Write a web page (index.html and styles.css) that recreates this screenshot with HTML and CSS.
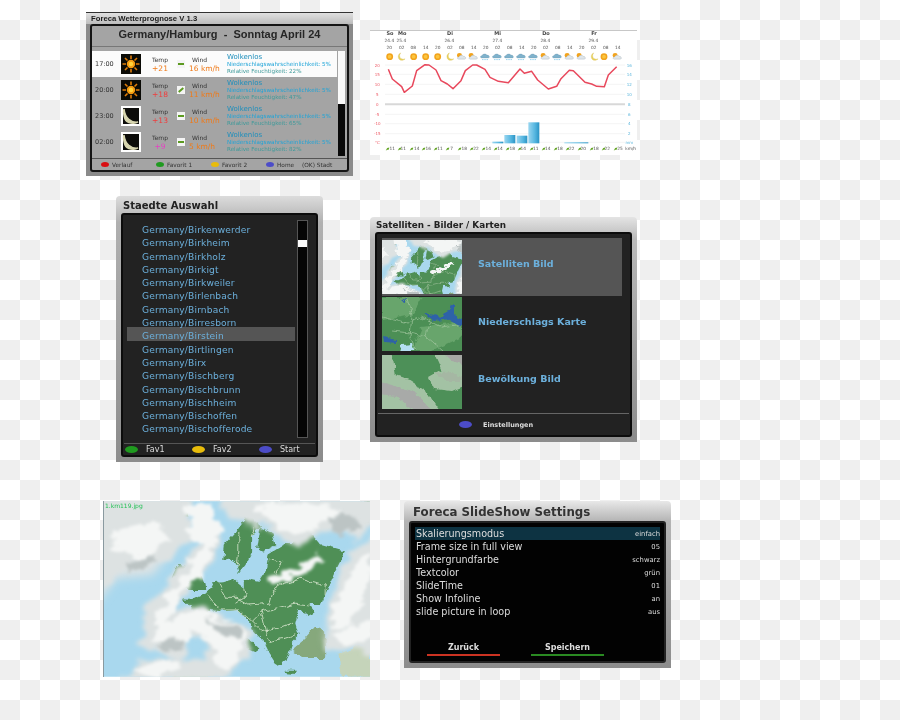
FILE: index.html
```html
<!DOCTYPE html>
<html lang="de">
<head>
<meta charset="utf-8">
<title>Foreca</title>
<link rel="stylesheet" href="styles.css">
</head>
<body>
<svg class="defs" width="0" height="0" aria-hidden="true">
  <defs>
    <linearGradient id="bar" x1="0" y1="0" x2="1" y2="0">
      <stop offset="0" stop-color="#9ad6f0"/><stop offset=".6" stop-color="#55b6e0"/><stop offset="1" stop-color="#2a93c4"/>
    </linearGradient>
    <filter id="haze" x="-15%" y="-15%" width="130%" height="130%">
      <feGaussianBlur stdDeviation="14"/>
    </filter>
    <filter id="coast" x="-5%" y="-5%" width="110%" height="110%">
      <feTurbulence type="fractalNoise" baseFrequency=".035" numOctaves="3" seed="7" result="n"/>
      <feDisplacementMap in="SourceGraphic" in2="n" scale="22" xChannelSelector="R" yChannelSelector="G"/>
      <feGaussianBlur stdDeviation="1.500"/>
    </filter>
    <filter id="cloudA" x="-10%" y="-10%" width="120%" height="120%">
      <feTurbulence type="fractalNoise" baseFrequency=".012 .022" numOctaves="4" seed="11" result="n"/>
      <feDisplacementMap in="SourceGraphic" in2="n" scale="70" xChannelSelector="R" yChannelSelector="G"/>
      <feGaussianBlur stdDeviation="7"/>
    </filter>
    <filter id="cloudB" x="-10%" y="-10%" width="120%" height="120%">
      <feTurbulence type="fractalNoise" baseFrequency=".02 .035" numOctaves="4" seed="23" result="n"/>
      <feDisplacementMap in="SourceGraphic" in2="n" scale="55" xChannelSelector="G" yChannelSelector="R"/>
      <feGaussianBlur stdDeviation="5"/>
    </filter>
    <filter id="thumbRough" x="-5%" y="-5%" width="110%" height="110%">
      <feTurbulence type="fractalNoise" baseFrequency=".14" numOctaves="3" seed="5" result="n"/>
      <feDisplacementMap in="SourceGraphic" in2="n" scale="6" xChannelSelector="R" yChannelSelector="G"/>
    </filter>
    <symbol id="sun" viewBox="0 0 20 20">
      <rect width="20" height="20" fill="#0a0a05"/>
      <g stroke="#e07c08" stroke-width="1.600">
        <path d="M10 1.500V5M10 15v3.500M1.500 10H5M15 10h3.500M4 4l2.500 2.500M13.500 13.500L16 16M16 4l-2.500 2.500M6.500 13.500L4 16"/>
      </g>
      <circle cx="10" cy="10" r="4.200" fill="#f59b12"/>
      <circle cx="10" cy="10" r="2.200" fill="#ffd23c"/>
    </symbol>
    <symbol id="moon" viewBox="0 0 20 20">
      <rect width="20" height="20" fill="#fff"/>
      <rect x="2" y="2" width="16" height="16" fill="#0c0c0a"/>
      <path d="M3 3 C4 12 10 17 17 16 C14 18 6 18 4 13 C3 10 2 6 3 3Z" fill="#d8d6b0" stroke="#d8d6b0" stroke-width="1.500"/>
    </symbol>
    <symbol id="wsun" viewBox="0 0 30 30">
      <circle cx="15" cy="15" r="11" fill="#f2a31c"/>
      <circle cx="15" cy="15" r="6" fill="#fbc53f"/>
    </symbol>
    <symbol id="wmoon" viewBox="0 0 30 30">
      <path d="M12 3 C4 12 10 27 26 22 C20 30 4 28 4 15 C4 9 7 5 12 3Z" fill="#e9d25e" stroke="#d9bf50"/>
    </symbol>
    <symbol id="wcloud" viewBox="0 0 36 30">
      <circle cx="11" cy="11" r="8" fill="#f2a31c"/>
      <path d="M8 23 C3 23 3 16 9 16 C11 9 22 9 24 14 C31 13 34 23 27 23Z" fill="#dfe6ea" stroke="#9aa5ad"/>
    </symbol>
    <symbol id="wrain" viewBox="0 0 36 30">
      <path d="M6 19 C1 19 1 12 7 12 C9 5 21 5 23 10 C31 9 34 19 27 19Z" fill="#7fb2cc" stroke="#6c98ae"/>
      <path d="M10 23v3M17 23v3M24 23v3" stroke="#2fa6dc" stroke-width="2.500"/>
    </symbol>
    <symbol id="leaf" viewBox="0 0 12 12">
      <path d="M1 11 L5 4 L11 2 L10 8 L4 9Z" fill="#69a82c"/>
    </symbol>
    <symbol id="europe" viewBox="24 18 801 528" preserveAspectRatio="xMidYMid slice">
      <rect x="0" y="0" width="860" height="560" fill="#a9d8ee"/>
      <g fill="#4f8f57" filter="url(#coast)">
        <path d="M380 195L385 150L420 110L450 65L490 85L500 95L470 120L470 170L450 210L430 235L420 200L400 190Z"/>
        <path d="M490 130L495 100L530 115L540 150L500 170L485 160Z"/>
        <path d="M260 310L295 312L335 292L350 265L380 262L415 252L445 275L445 250L490 260L510 230L520 175L560 150L650 115L680 150L750 170L715 240L690 300L680 330L640 330L655 350L635 360L610 345L600 385L610 420L590 440L570 500L545 510L520 470L505 440L470 405L460 380L430 345L380 350L340 345L295 350Z"/>
        <path d="M440 420L470 440L495 465L480 470L455 460L435 430Z"/>
        <path d="M265 285L295 225L315 225L330 270L332 285L290 285Z"/>
        <path d="M228 248L245 210L270 212L255 245Z"/>
        <path d="M190 395L205 365L248 385L245 405L200 405Z"/>
        <path d="M240 50L270 40L275 70L250 70Z"/>
        <path d="M570 525L605 525L600 535L572 533Z"/>
        <path d="M730 30L825 20L825 80L760 70Z"/>
        <path d="M730 390L825 345L825 365L750 400Z"/>
        <path d="M590 465L620 440L660 395L690 410L690 490L620 490Z" fill="#86a87c"/>
      </g>
      <g filter="url(#coast)">
        <path d="M730 480L825 440V546H740Z" fill="#c5d4ba"/>
        <path d="M230 520L300 505L360 510L350 546H230Z" fill="#cdd9bd"/>
      </g>
      <g fill="none" stroke="#d6e4cc" stroke-width="2.500" filter="url(#coast)">
        <path d="M335 295L375 345L430 345L470 380L500 350L560 335L600 325L640 330"/>
        <path d="M370 265L395 310L425 310L460 330L520 325L530 290L560 270L620 250L690 270L690 300"/>
        <path d="M445 275L450 305L420 325"/>
        <path d="M470 380L500 410L550 400L590 385M500 350L510 395L520 440L570 430L600 420"/>
        <path d="M430 110L430 170L425 215M470 120L480 100M520 195L560 200L540 235"/>
      </g>
      <path d="M0 0H270L240 150L170 240L60 250L0 330Z" fill="#dde3e4" filter="url(#haze)"/>
      <path d="M690 440L720 300L780 190L860 110V440Z" fill="#dfe3e3" filter="url(#haze)"/>
      <g filter="url(#cloudA)" fill="#dde2e2">
        <path d="M0 0H300L285 130L205 200L110 190L0 300Z"/>
        <path d="M380 0H860V60L790 130L680 115L590 150L510 90L440 70L380 60Z"/>
        <path d="M690 470L690 340L750 200L860 100V470Z"/>
        <path d="M70 560L120 505L230 490L370 495L370 560Z"/>
        <path d="M140 440L165 310L265 195L340 110L380 120L345 200L300 250L250 320L200 400L200 450Z"/>
        <path d="M140 440L190 360L300 340L410 365L475 425L450 480L400 550L345 540L340 450L290 430L250 490L180 480Z"/>
      </g>
      <g filter="url(#cloudB)" fill="#f4f6f5">
        <path d="M50 110L190 80L215 130L150 185L50 165Z"/>
        <path d="M175 380L215 300L285 215L345 130L365 140L335 200L290 260L230 340L195 400Z"/>
        <path d="M275 30H345L375 100L335 150L285 130Z"/>
        <path d="M165 430L200 375L300 350L400 375L455 420L430 470L400 530L360 520L350 440L290 415L245 470L190 460Z"/>
        <path d="M520 255L590 220L670 175L690 190L620 240L540 270Z"/>
        <path d="M470 25H700L730 60L650 105L590 120L520 75Z"/>
        <path d="M700 400L735 300L795 180L825 170V270L765 400Z"/>
        <path d="M100 535L180 495L265 505L210 540Z"/>
        <path d="M275 205L330 180L320 250L290 240Z"/>
        <path d="M720 420L825 380V430L745 450Z"/>
      </g>
      <g filter="url(#cloudB)" fill="#bcc4c4">
        <path d="M175 450L260 432L270 460L205 478Z"/>
        <path d="M700 70L780 50L790 100L720 120Z"/>
        <path d="M330 372L420 388L440 430L370 412Z"/>
        <path d="M80 210L170 175L180 200L100 235Z"/>
      </g>
    </symbol>
  </defs>
</svg>

<main class="canvas">

  <section class="panel forecast">
    <h2 class="f-title">Foreca Wetterprognose V 1.3</h2>
    <div class="f-frame">
      <h1 class="f-head">Germany/Hamburg &nbsp;-&nbsp; Sonntag April 24</h1>
      <div class="f-body">
        <div class="f-rows">
          <div class="f-row active">
            <span class="f-time">17:00</span>
            <svg class="f-icon"><use href="#sun"/></svg>
            <div class="f-temp"><span>Temp</span><b class="t-orange">+21</b></div>
            <span class="f-wind-ico"><i class="flat"></i></span>
            <div class="f-wind"><span>Wind</span><b>16 km/h</b></div>
            <div class="f-desc"><strong>Wolkenlos</strong><span>Niederschlagswahrscheinlichkeit: 5%</span><span>Relative Feuchtigkeit: 22%</span></div>
          </div>
          <div class="f-row">
            <span class="f-time">20:00</span>
            <svg class="f-icon"><use href="#sun"/></svg>
            <div class="f-temp"><span>Temp</span><b class="t-red">+18</b></div>
            <span class="f-wind-ico"><i class="up"></i></span>
            <div class="f-wind"><span>Wind</span><b>11 km/h</b></div>
            <div class="f-desc"><strong>Wolkenlos</strong><span>Niederschlagswahrscheinlichkeit: 5%</span><span>Relative Feuchtigkeit: 47%</span></div>
          </div>
          <div class="f-row">
            <span class="f-time">23:00</span>
            <svg class="f-icon"><use href="#moon"/></svg>
            <div class="f-temp"><span>Temp</span><b class="t-red">+13</b></div>
            <span class="f-wind-ico"><i class="flat"></i></span>
            <div class="f-wind"><span>Wind</span><b>10 km/h</b></div>
            <div class="f-desc"><strong>Wolkenlos</strong><span>Niederschlagswahrscheinlichkeit: 5%</span><span>Relative Feuchtigkeit: 65%</span></div>
          </div>
          <div class="f-row">
            <span class="f-time">02:00</span>
            <svg class="f-icon"><use href="#moon"/></svg>
            <div class="f-temp"><span>Temp</span><b class="t-pink">+9</b></div>
            <span class="f-wind-ico"><i class="flat"></i></span>
            <div class="f-wind"><span>Wind</span><b>5 km/h</b></div>
            <div class="f-desc"><strong>Wolkenlos</strong><span>Niederschlagswahrscheinlichkeit: 5%</span><span>Relative Feuchtigkeit: 82%</span></div>
          </div>
        </div>
        <div class="f-scroll"><i></i></div>
      </div>
      <footer class="f-foot">
        <span class="f-key"><i class="dot red"></i>Verlauf</span>
        <span class="f-key"><i class="dot green"></i>Favorit 1</span>
        <span class="f-key"><i class="dot yellow"></i>Favorit 2</span>
        <span class="f-key"><i class="dot blue"></i>Home</span>
        <span class="f-key f-ok">(OK) Stadt</span>
      </footer>
    </div>
  </section>

  <section class="panel chart">
    <svg class="chart-svg" viewBox="30 30 801 375" role="img" aria-label="Wetterdiagramm">
      <path class="c-top" d="M30 31H831"/>
      <g class="c-grid">
        <path d="M75 135H795M75 163H795M75 193H795M75 223H795M75 283H795M75 311H795M75 341H795M75 367H795"/>
      </g>
      <path class="c-zero" d="M75 253H795"/>
      <g class="c-day">
        <text x="90" y="44">So</text><text x="127" y="44">Mo</text><text x="270" y="44">Di</text><text x="413" y="44">Mi</text><text x="558" y="44">Do</text><text x="702" y="44">Fr</text>
      </g>
      <g class="c-date">
        <text x="88" y="66">24.4</text><text x="124" y="66">25.4</text><text x="268" y="66">26.4</text><text x="412" y="66">27.4</text><text x="556" y="66">28.4</text><text x="700" y="66">29.4</text>
      </g>
      <g class="c-hour">
        <text x="88" y="87">20</text><text x="125" y="87">02</text><text x="160" y="87">08</text><text x="197" y="87">14</text><text x="233" y="87">20</text><text x="270" y="87">02</text><text x="305" y="87">08</text><text x="341" y="87">14</text><text x="377" y="87">20</text><text x="413" y="87">02</text><text x="449" y="87">08</text><text x="485" y="87">14</text><text x="521" y="87">20</text><text x="557" y="87">02</text><text x="593" y="87">08</text><text x="629" y="87">14</text><text x="665" y="87">20</text><text x="701" y="87">02</text><text x="737" y="87">08</text><text x="773" y="87">14</text>
      </g>
      <use href="#wsun" x="75" y="96" width="28" height="28"/>
      <use href="#wmoon" x="111" y="96" width="28" height="28"/>
      <use href="#wsun" x="147" y="96" width="28" height="28"/>
      <use href="#wsun" x="183" y="96" width="28" height="28"/>
      <use href="#wsun" x="219" y="96" width="28" height="28"/>
      <use href="#wmoon" x="255" y="96" width="32" height="28"/>
      <use href="#wcloud" x="287" y="96" width="36" height="28"/>
      <use href="#wcloud" x="322" y="96" width="36" height="28"/>
      <use href="#wrain" x="358" y="96" width="36" height="28"/>
      <use href="#wrain" x="394" y="96" width="36" height="28"/>
      <use href="#wrain" x="430" y="96" width="36" height="28"/>
      <use href="#wrain" x="466" y="96" width="36" height="28"/>
      <use href="#wrain" x="502" y="96" width="36" height="28"/>
      <use href="#wcloud" x="538" y="96" width="36" height="28"/>
      <use href="#wrain" x="574" y="96" width="36" height="28"/>
      <use href="#wcloud" x="610" y="96" width="36" height="28"/>
      <use href="#wcloud" x="646" y="96" width="36" height="28"/>
      <use href="#wmoon" x="690" y="96" width="28" height="28"/>
      <use href="#wsun" x="718" y="96" width="28" height="28"/>
      <use href="#wcloud" x="754" y="96" width="36" height="28"/>
      <g class="c-axis-l">
        <text x="52" y="140">20</text><text x="52" y="168">15</text><text x="52" y="198">10</text><text x="52" y="228">5</text><text x="52" y="258">0</text><text x="52" y="288">-5</text><text x="52" y="316">-10</text><text x="52" y="346">-15</text><text x="52" y="372">°C</text>
      </g>
      <g class="c-axis-r">
        <text x="808" y="140">16</text><text x="808" y="168">14</text><text x="808" y="198">12</text><text x="808" y="228">10</text><text x="808" y="258">8</text><text x="808" y="288">6</text><text x="808" y="316">4</text><text x="808" y="346">2</text><text x="808" y="372">mm</text>
      </g>
      <g class="c-bars">
        <rect x="397" y="365" width="33" height="5"/>
        <rect x="433" y="345" width="33" height="25"/>
        <rect x="470" y="347" width="32" height="23"/>
        <rect x="505" y="307" width="33" height="63"/>
        <rect x="613" y="367" width="72" height="3"/>
      </g>
      <polyline class="c-line" points="85,148 97,177 125,200 133,217 157,198 170,152 195,134 207,135 228,150 243,182 262,192 279,206 303,182 316,152 338,135 350,135 375,148 390,172 415,184 445,188 480,147 493,160 515,154 533,180 565,207 590,199 603,176 628,151 640,152 675,187 695,192 710,199 733,200 745,165 770,140"/>
      <g class="c-wind">
        <text x="97" y="391">11</text><text x="130" y="391">11</text><text x="170" y="391">14</text><text x="205" y="391">16</text><text x="240" y="391">11</text><text x="275" y="391">7</text><text x="313" y="391">18</text><text x="348" y="391">22</text><text x="385" y="391">14</text><text x="420" y="391">14</text><text x="457" y="391">18</text><text x="490" y="391">14</text><text x="527" y="391">11</text><text x="563" y="391">14</text><text x="600" y="391">18</text><text x="635" y="391">22</text><text x="670" y="391">20</text><text x="708" y="391">18</text><text x="742" y="391">22</text><text x="780" y="391">25</text><text x="812" y="391">km/h</text>
      </g>
      <g>
        <use href="#leaf" x="76" y="380" width="13" height="13"/><use href="#leaf" x="112" y="380" width="13" height="13"/><use href="#leaf" x="148" y="380" width="13" height="13"/><use href="#leaf" x="184" y="380" width="13" height="13"/><use href="#leaf" x="220" y="380" width="13" height="13"/><use href="#leaf" x="256" y="380" width="13" height="13"/><use href="#leaf" x="292" y="380" width="13" height="13"/><use href="#leaf" x="328" y="380" width="13" height="13"/><use href="#leaf" x="364" y="380" width="13" height="13"/><use href="#leaf" x="400" y="380" width="13" height="13"/><use href="#leaf" x="436" y="380" width="13" height="13"/><use href="#leaf" x="472" y="380" width="13" height="13"/><use href="#leaf" x="508" y="380" width="13" height="13"/><use href="#leaf" x="544" y="380" width="13" height="13"/><use href="#leaf" x="580" y="380" width="13" height="13"/><use href="#leaf" x="616" y="380" width="13" height="13"/><use href="#leaf" x="652" y="380" width="13" height="13"/><use href="#leaf" x="688" y="380" width="13" height="13"/><use href="#leaf" x="724" y="380" width="13" height="13"/><use href="#leaf" x="760" y="380" width="13" height="13"/>
      </g>
    </svg>
  </section>

  <section class="panel cities">
    <h2 class="d-title">Staedte Auswahl</h2>
    <div class="d-frame">
      <div class="c-main">
        <ul class="c-list">
          <li>Germany/Birkenwerder</li>
          <li>Germany/Birkheim</li>
          <li>Germany/Birkholz</li>
          <li>Germany/Birkigt</li>
          <li>Germany/Birkweiler</li>
          <li>Germany/Birlenbach</li>
          <li>Germany/Birnbach</li>
          <li>Germany/Birresborn</li>
          <li class="sel">Germany/Birstein</li>
          <li>Germany/Birtlingen</li>
          <li>Germany/Birx</li>
          <li>Germany/Bischberg</li>
          <li>Germany/Bischbrunn</li>
          <li>Germany/Bischheim</li>
          <li>Germany/Bischoffen</li>
          <li>Germany/Bischofferode</li>
        </ul>
        <div class="c-scroll"><i></i></div>
      </div>
      <footer class="c-foot">
        <span class="c-key"><i class="dot big green"></i>Fav1</span>
        <span class="c-key"><i class="dot big yellow"></i>Fav2</span>
        <span class="c-key"><i class="dot big blue"></i>Start</span>
      </footer>
    </div>
  </section>

  <section class="panel sat">
    <h2 class="s-title">Satelliten - Bilder / Karten</h2>
    <div class="d-frame s-frame">
      <div class="s-list">
        <div class="s-row sel">
          <svg class="s-thumb" viewBox="180 30 560 378" preserveAspectRatio="xMidYMid slice"><use href="#europe" x="24" y="18" width="801" height="528"/></svg>
          <span>Satelliten Bild</span>
        </div>
        <div class="s-row">
          <svg class="s-thumb" viewBox="0 0 80 54">
            <rect width="80" height="54" fill="#4c8f55"/>
            <g filter="url(#thumbRough)">
              <g fill="#68a56c"><path d="M0 0H40L30 18L0 24Z"/><path d="M40 30L80 24V40L50 54H30Z"/></g>
              <g fill="none" stroke="#a4c7a0" stroke-width=".7"><path d="M0 20L22 26L40 20L60 30L80 27M24 0L30 18L28 40L34 54M48 22L44 40L60 54M10 34L28 36L44 40"/></g>
              <g fill="#2f62a8"><path d="M42 16L60 20L68 10L72 8L72 16L80 24V30L66 22L52 24Z"/><path d="M2 40L14 43L14 46L3 45Z"/><path d="M20 4L24 1L23 5Z"/></g>
              <path d="M20 48L30 47L32 54H18Z" fill="#b5e0f2"/>
            </g>
          </svg>
          <span>Niederschlags Karte</span>
        </div>
        <div class="s-row">
          <svg class="s-thumb" viewBox="0 0 80 54">
            <rect width="80" height="54" fill="#a3c2a4"/>
            <g filter="url(#thumbRough)">
              <path d="M10 -4H52L60 14L46 22L52 34L70 36L84 30V58H58L44 36L26 24L14 20Z" fill="#4d9058"/>
              <path d="M60 -4H84V10L70 6Z" fill="#a6a8a4"/>
              <path d="M-4 26L30 36L54 58H34L14 42L-4 40Z" fill="#a8aaa8"/>
              <path d="M52 18L70 16L84 26L62 26Z" fill="#a5b7a3"/>
            </g>
          </svg>
          <span>Bewölkung Bild</span>
        </div>
      </div>
      <footer class="s-foot"><i class="dot big blue"></i><span>Einstellungen</span></footer>
    </div>
  </section>

  <section class="panel satmap">
    <svg class="map-svg" viewBox="24 18 801 528" role="img" aria-label="Satellitenbild Europa"><use href="#europe" x="24" y="18" width="801" height="528"/></svg>
    <span class="map-label">1.km119.jpg</span>
  </section>

  <section class="panel slide">
    <h2 class="l-title">Foreca SlideShow Settings</h2>
    <div class="d-frame l-frame">
      <ul class="l-list">
        <li class="sel"><span>Skalierungsmodus</span><em>einfach</em></li>
        <li><span>Frame size in full view</span><em>05</em></li>
        <li><span>Hintergrundfarbe</span><em>schwarz</em></li>
        <li><span>Textcolor</span><em>grün</em></li>
        <li><span>SlideTime</span><em>01</em></li>
        <li><span>Show Infoline</span><em>an</em></li>
        <li><span>slide picture in loop</span><em>aus</em></li>
      </ul>
      <footer class="l-foot">
        <span class="l-btn back">Zurück</span>
        <span class="l-btn save">Speichern</span>
      </footer>
    </div>
  </section>

</main>
</body>
</html>
```

FILE: styles.css
```css
* { box-sizing: border-box; }
html, body { margin: 0; padding: 0; }
body { font-family: "DejaVu Sans", sans-serif; background: #fff; overflow: hidden; }
h1, h2, ul { margin: 0; padding: 0; }
ul { list-style: none; }
i, em { font-style: normal; }
.defs { position: absolute; }

.canvas {
  position: relative;
  width: 900px;
  height: 720px;
  background: conic-gradient(#efefef 25%, #fff 0 50%, #efefef 0 75%, #fff 0) 0 0 / 40px 40px;
}

.panel { position: absolute; filter: blur(.55px); display: flex; flex-direction: column; }
.forecast { left: 86px; top: 12px; width: 267px; height: 164px; background: #8a8a8a; border-top: 1px solid #333; }
.chart { left: 370px; top: 30px; width: 267px; height: 125px; background: #fff; }
.cities { left: 116px; top: 196px; width: 207px; height: 266px; background: linear-gradient(#dcdcdc, #b0b0b0 10%, #8c8c8c); border-radius: 4px 4px 0 0; }
.sat { left: 370px; top: 217px; width: 267px; height: 225px; background: linear-gradient(#e4e4e4, #b8b8b8 10%, #8c8c8c); border-radius: 4px 4px 0 0; }
.satmap { left: 103px; top: 501px; width: 267px; height: 176px; border-left: 1px solid #8a9aa0; overflow: hidden; }
.slide { left: 404px; top: 501px; width: 267px; height: 167px; background: linear-gradient(#e8e8e8, #b4b4b4 12%, #8c8c8c); border-radius: 4px 4px 0 0; }

.dot { display: inline-block; width: 8px; height: 5px; border-radius: 50%; flex: none; }
.dot.big { width: 13px; height: 7px; }
.red { background: #d80e12; }
.green { background: #1f9a1f; }
.yellow { background: #e8bc0a; }
.blue { background: #4c4cc8; }

/* Forecast */
.f-title { height: 11px; padding: 1px 0 0 5px; font-family: "Liberation Sans", sans-serif; font-size: 7.7px; line-height: 10px; font-weight: 700; color: #1c1c1c; background: linear-gradient(#e0e0e0, #bcbcbc); flex: none; }
.f-frame { flex: 1; margin: 0 4px 4px; border: 2px solid #141414; border-radius: 3px; background: #a4a4a4; display: flex; flex-direction: column; }
.f-head { height: 18px; font-family: "Liberation Sans", sans-serif; font-size: 11px; line-height: 17px; font-weight: 700; text-align: center; color: #262626; flex: none; }
.f-body { height: 111px; display: flex; margin-top: 2px; border-top: 1px solid #777; padding-top: 4px; flex: none; }
.f-rows { flex: 1; display: flex; flex-direction: column; }
.f-row { height: 26px; display: grid; grid-template-columns: 29px 20px 36px 8px 42px 1fr; align-items: center; color: #333; flex: none; }
.f-row.active { background: #fbfbfb; }
.f-time { font-size: 6.5px; padding-left: 3px; color: #333; }
.f-icon { width: 20px; height: 20px; display: block; }
.f-temp { display: flex; flex-direction: column; align-items: center; font-size: 6px; line-height: 9px; padding-left: 2px; }
.f-temp b, .f-wind b { font-size: 7.5px; font-weight: 400; }
.t-orange { color: #f07a18; }
.t-red { color: #f03c3c; }
.t-pink { color: #e83ec4; }
.f-wind-ico { width: 8px; height: 8px; background: #f4f4f4; display: flex; align-items: center; justify-content: center; }
.f-wind-ico i { display: block; background: #5c9a20; width: 6px; height: 2px; }
.f-wind-ico i.up { transform: rotate(-40deg); }
.f-wind { display: flex; flex-direction: column; align-items: flex-start; font-size: 6px; line-height: 9px; padding-left: 4px; }
.f-wind span { padding-left: 3px; }
.f-wind b { color: #f07a18; }
.f-desc { display: flex; flex-direction: column; font-size: 5.6px; line-height: 7px; color: #1ea4d8; white-space: nowrap; }
.f-desc strong { font-size: 7px; font-weight: 400; color: #1f8fbc; }
.f-desc span:last-child { color: #3d9a9a; }
.f-scroll { width: 7px; margin: 0 2px 0 1px; height: 105px; background: #0a0a0a; flex: none; }
.f-scroll i { display: block; height: 53px; background: #fafafa; }
.f-foot { height: 12px; margin-top: 1px; border-top: 1px solid #555; display: flex; align-items: center; padding-left: 9px; font-size: 5.8px; color: #333; flex: none; }
.f-key { display: flex; align-items: center; gap: 3px; width: 55px; flex: none; white-space: nowrap; }
.f-key:nth-child(4) { width: 36px; }
.f-ok { width: auto; }

/* Chart */
.chart-svg { display: block; width: 267px; height: 125px; }
.chart-svg text { font-family: "DejaVu Sans", sans-serif; text-anchor: middle; }
.c-top { stroke: #999; stroke-width: 2; fill: none; }
.c-grid path { stroke: #eeeeee; stroke-width: 2; fill: none; }
.c-zero { stroke: #d8d8d8; stroke-width: 6; fill: none; }
.c-day text { font-size: 15px; font-weight: 700; fill: #444; }
.c-date text, .c-hour text { font-size: 13px; fill: #555; }
.c-axis-l text { font-size: 12px; fill: #ee5a66; }
.c-axis-r text { font-size: 12px; fill: #58b4dc; }
.c-bars rect { fill: url(#bar); }
.c-line { fill: none; stroke: #e8485c; stroke-width: 4.5; stroke-linejoin: round; }
.c-wind text { font-size: 13px; fill: #555; }

/* Dark windows */
.d-title { height: 17px; padding: 2px 0 0 7px; font-size: 10px; line-height: 15px; font-weight: 700; color: #222; flex: none; }
.d-frame { flex: 1; margin: 0 5px 5px; border: 2px solid #0c0c0c; border-radius: 3px; background: #222; display: flex; flex-direction: column; min-height: 0; }

/* Cities */
.c-main { flex: 1; display: flex; padding: 5px 8px 0 4px; gap: 2px; min-height: 0; }
.c-list { flex: 1; padding-top: 1px; font-size: 9.1px; letter-spacing: .15px; }
.c-list li { height: 13.3px; line-height: 18.6px; padding-left: 15px; color: #6cb0dc; white-space: nowrap; }
.c-list li.sel { background: #555; }
.c-scroll { width: 11px; height: 218px; background: #050505; border: 1px solid #555; padding-top: 19px; flex: none; }
.c-scroll i { display: block; height: 7px; background: #fafafa; }
.c-foot { height: 11px; margin: 0 1px 1px; border-top: 1px solid #555; display: flex; align-items: center; padding-left: 1px; font-size: 8px; color: #ddd; flex: none; }
.c-key { display: flex; align-items: center; gap: 8px; width: 67px; flex: none; }

/* Satellite */
.s-title { padding: 0 0 0 6px; height: 15px; font-size: 8.8px; line-height: 16px; font-weight: 700; color: #222; flex: none; }
.s-list { flex: 1; padding: 4px 8px 0 5px; display: flex; flex-direction: column; }
.s-row { height: 57.5px; display: flex; align-items: center; gap: 16px; font-size: 9.5px; font-weight: 700; color: #6cb0dc; flex: none; }
.s-row span { padding-bottom: 6px; }
.s-row.sel { background: #555; }
.s-thumb { width: 80px; height: 54px; display: block; flex: none; }
.s-foot { height: 22px; margin: 0 1px; border-top: 1px solid #666; display: flex; align-items: center; padding-left: 81px; gap: 11px; font-size: 6.5px; font-weight: 700; color: #ddd; flex: none; }

/* Map */
.map-svg { display: block; width: 266px; height: 176px; }
.map-label { position: absolute; left: 1px; top: 1px; font-size: 6px; line-height: 8px; color: #22c055; }

/* Settings */
.l-title { height: 20px; padding: 1px 0 0 9px; font-size: 11.8px; line-height: 20px; font-weight: 700; color: #333; flex: none; }
.l-frame { background: #020202; border-color: #222; }
.l-list { padding: 4px 4px 0; flex: none; }
.l-list li { height: 13px; display: flex; justify-content: space-between; align-items: center; font-size: 9.6px; color: #ddd; padding-left: 1px; white-space: nowrap; }
.l-list li.sel { background: #0d3342; }
.l-list em { font-size: 6.8px; }
.l-foot { margin-top: auto; display: flex; padding: 0 0 5px 16px; gap: 31px; }
.l-btn { width: 73px; text-align: center; font-size: 8px; line-height: 12px; font-weight: 700; color: #ddd; border-bottom: 2px solid; }
.back { border-color: #cc3322; }
.save { border-color: #2a8a22; }
```
